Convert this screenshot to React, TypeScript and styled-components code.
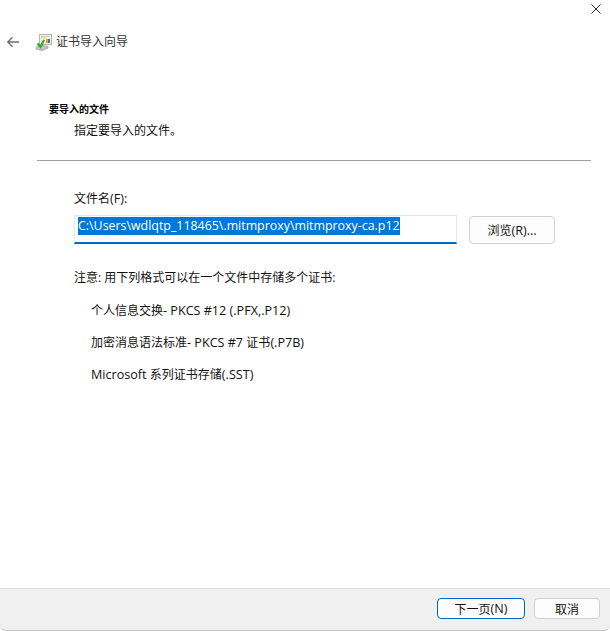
import React from "react";
import styled, { createGlobalStyle } from "styled-components";

const Global = createGlobalStyle`
  html, body { margin: 0; padding: 0; background: #fff; }
  body {
    font-family: "Open Sans", "Noto Sans CJK SC", sans-serif;
    font-size: 12px;
    color: #111;
  }
`;

const Window = styled.div`
  width: 610px;
  height: 631px;
  display: flex;
  flex-direction: column;
  overflow: hidden;
`;
const TitleBar = styled.div`
  height: 18px;
  display: flex;
  justify-content: flex-end;
  align-items: center;
  padding-right: 9px;
`;
const CloseButton = styled.div`
  width: 10px;
  height: 10px;
  display: flex;
`;
const HeaderRow = styled.div`
  height: 46px;
  margin-top: 1px;
  display: flex;
  align-items: center;
  padding-left: 6px;
`;
const BackIcon = styled.div`
  width: 14px;
  height: 12px;
  display: flex;
  margin-right: 15px;
`;
const WizardIcon = styled.div`
  width: 17px;
  height: 17px;
  display: flex;
  margin-right: 4px;
`;
const WizardTitle = styled.div`
  font-size: 12px;
  line-height: 16px;
  color: #333;
`;
const Body = styled.div`
  flex: 1;
  display: flex;
  flex-direction: column;
`;
const SectionHead = styled.div`
  padding: 0 0 0 49px;
  margin-top: 37px;
`;
const SectionTitle = styled.div`
  font-size: 10px;
  line-height: 14px;
  font-weight: 700;
  color: #000;
`;
const SectionSub = styled.div`
  margin: 7px 0 0 25px;
  line-height: 16px;
`;
const Divider = styled.div`
  height: 1px;
  margin: 21px 19px 0 37px;
  background: #a0a0a0;
`;
const Content = styled.div`
  padding: 30px 0 0 74px;
  display: flex;
  flex-direction: column;
`;
const FieldLabel = styled.div`
  line-height: 16px;
`;
const FieldRow = styled.div`
  display: flex;
  align-items: flex-start;
  margin-top: 8px;
`;
const PathBox = styled.div`
  width: 383px;
  height: 29px;
  box-sizing: border-box;
  background: #fff;
  border: 1px solid #e3e7ec;
  border-bottom: 2px solid #0067c0;
  padding: 1px 0 0 3px;
  white-space: nowrap;
  overflow: hidden;
`;
const Selected = styled.span`
  display: inline-block;
  height: 18px;
  line-height: 18px;
  background: #0078d7;
  color: #fff;
  font-size: 12.4px;
`;
const Latin = styled.span`
  font-size: 12.6px;
`;
const Button = styled.div<{ $width: number; $height: number; $primary?: boolean }>`
  width: ${(p) => p.$width}px;
  height: ${(p) => p.$height}px;
  box-sizing: border-box;
  display: flex;
  align-items: center;
  justify-content: center;
  border-radius: 4px;
  background: #fdfdfd;
  font-size: 12px;
  color: #111;
  border: ${(p) => (p.$primary ? "1.5px solid #0067c0" : "1px solid #d0d0d0")};
`;
const BrowseSlot = styled.div`
  margin: 1px 0 0 12px;
`;
const Note = styled.div`
  margin-top: 26px;
  line-height: 16px;
`;
const FormatList = styled.div`
  margin: 17px 0 0 17px;
  display: flex;
  flex-direction: column;
  gap: 16px;
`;
const FormatItem = styled.div`
  line-height: 16px;
`;
const Footer = styled.div`
  height: 43px;
  box-sizing: border-box;
  background: #f0f0f0;
  border-top: 1px solid #dfdfdf;
  border-bottom: 1px solid #c4c4c4;
  border-radius: 0 0 6px 6px;
  display: flex;
  justify-content: flex-end;
  align-items: flex-start;
  gap: 9px;
  padding: 9px 10px 0 0;
`;

export default function App() {
  return (
    <Window>
      <Global />
      <TitleBar>
        <CloseButton>
          <svg width="10" height="10" viewBox="0 0 10 10">
            <path d="M.5.5l9 9M9.5.5l-9 9" stroke="#222" strokeWidth="1" fill="none" />
          </svg>
        </CloseButton>
      </TitleBar>
      <HeaderRow>
        <BackIcon>
          <svg width="14" height="12" viewBox="0 0 14 12">
            <path d="M13 6H2M6.5 1.2L1.7 6l4.8 4.8" stroke="#6e6e6e" strokeWidth="1.3" fill="none" />
          </svg>
        </BackIcon>
        <WizardIcon>
          <svg width="17" height="17" viewBox="0 0 17 17">
            <rect x="4.5" y="0.5" width="12" height="10" fill="#f4f1e4" stroke="#b8b6a6" />
            <path d="M6 2.5h9M6 4h5" stroke="#d4d0ba" />
            <rect x="11" y="5" width="2" height="4" fill="#e8a020" />
            <rect x="13" y="5" width="2" height="4" fill="#3a6fc0" />
            <path d="M1 13.5l5-2.5 7 1.5v1.5l-6 2.5L1 15z" fill="#c4c8cc" stroke="#8c9094" strokeWidth="0.7" />
            <path d="M2.5 9.5l3 3.5L9 6" stroke="#3fa536" strokeWidth="2.2" fill="none" />
          </svg>
        </WizardIcon>
        <WizardTitle>证书导入向导</WizardTitle>
      </HeaderRow>
      <Body>
        <SectionHead>
          <SectionTitle>要导入的文件</SectionTitle>
          <SectionSub>指定要导入的文件。</SectionSub>
        </SectionHead>
        <Divider />
        <Content>
          <FieldLabel>文件名<Latin>(F):</Latin></FieldLabel>
          <FieldRow>
            <PathBox>
              <Selected>C:\Users\wdlqtp_118465\.mitmproxy\mitmproxy-ca.p12</Selected>
            </PathBox>
            <BrowseSlot>
              <Button $width={86} $height={28}>浏览<Latin>(R)...</Latin></Button>
            </BrowseSlot>
          </FieldRow>
          <Note>注意: 用下列格式可以在一个文件中存储多个证书:</Note>
          <FormatList>
            <FormatItem>个人信息交换<Latin>- PKCS #12 (.PFX,.P12)</Latin></FormatItem>
            <FormatItem>加密消息语法标准<Latin>- PKCS #7 </Latin>证书<Latin>(.P7B)</Latin></FormatItem>
            <FormatItem><Latin>Microsoft </Latin>系列证书存储<Latin>(.SST)</Latin></FormatItem>
          </FormatList>
        </Content>
      </Body>
      <Footer>
        <Button $width={88} $height={21} $primary>下一页<Latin>(N)</Latin></Button>
        <Button $width={66} $height={21}>取消</Button>
      </Footer>
    </Window>
  );
}
